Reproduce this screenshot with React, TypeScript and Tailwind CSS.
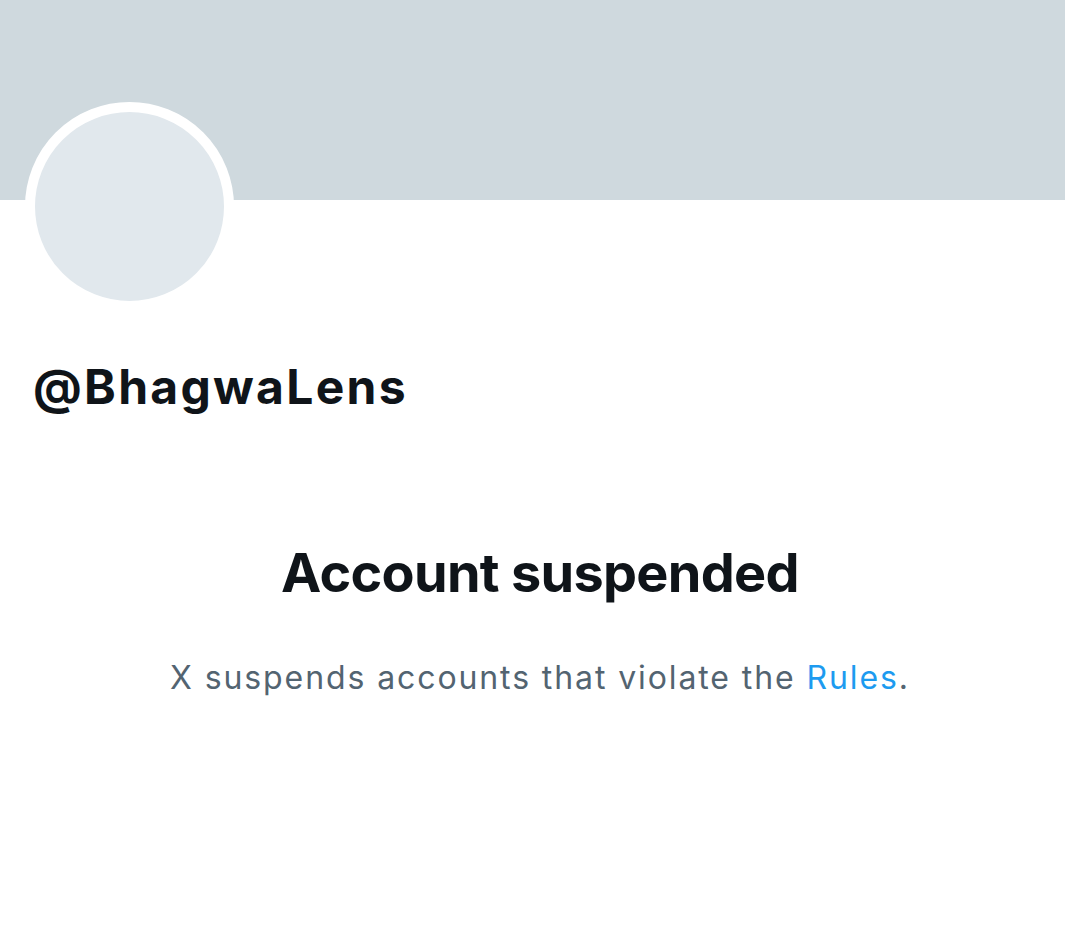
export default function App() {
  return (
    <div className="min-h-[927px] w-full bg-white font-['Inter','Liberation_Sans',sans-serif] text-[#0f1419]">
      <div className="h-[200px] bg-[#cfd9de]" />
      <div className="px-[25px]">
        <div className="-mt-[98px] h-[209px] w-[209px] rounded-full border-[10px] border-white bg-[#e1e8ed]" />
        <h2 className="mt-[46px] pl-[8px] text-[48px] font-bold leading-[60px] tracking-[2.3px]">
          @BhagwaLens
        </h2>
      </div>
      <div className="mt-[124px] flex flex-col items-center pl-[15px]">
        <h1 className="text-[54px] font-bold leading-[64px] tracking-[-0.7px]">Account suspended</h1>
        <p className="mt-[53px] text-[32px] leading-[40px] tracking-[1.9px] text-[#536471]">
          X suspends accounts that violate the{' '}
          <a href="#" className="text-[#1d9bf0]">Rules</a>.
        </p>
      </div>
    </div>
  );
}
